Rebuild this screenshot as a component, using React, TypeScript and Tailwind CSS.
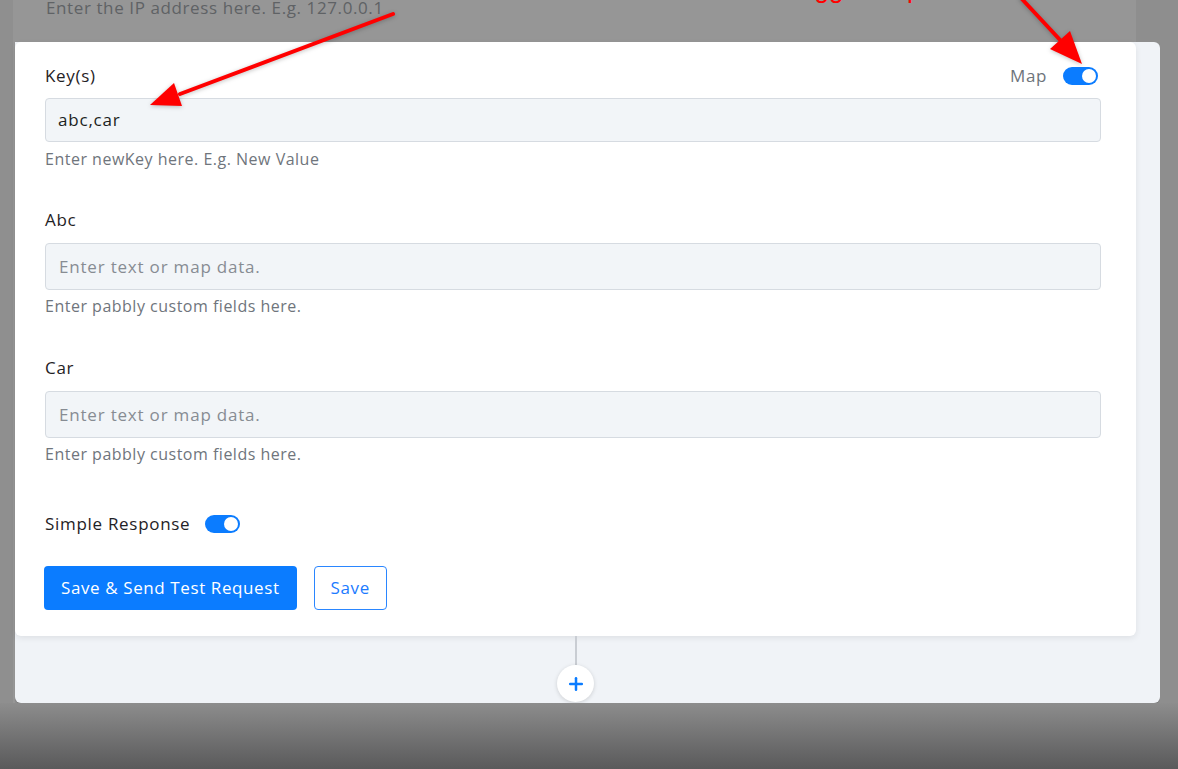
import { Plus } from 'lucide-react'

function Toggle() {
  return (
    <span className="relative inline-flex h-[18px] w-[35px] items-center rounded-full bg-[#0b7cff]">
      <span className="absolute right-[2px] h-[14px] w-[14px] rounded-full bg-white" />
    </span>
  )
}

interface FieldProps {
  label: string
  value?: string
  placeholder?: string
  help: string
  tall?: boolean
}

function Field({ label, value, placeholder, help, tall }: FieldProps) {
  return (
    <div className="flex flex-col">
      <div className="h-[24px] text-[17px] leading-[24px] tracking-[0.7px] text-[#1f2225]">{label}</div>
      <div
        className={`mt-[11px] flex items-center rounded-[4px] border border-[#d6dbe1] bg-[#f2f5f8] px-[13px] text-[17px] tracking-[0.8px] ${
          tall ? 'h-[47px]' : 'h-[44px]'
        }`}
      >
        {value ? (
          <span className="text-[#1c1f22]">{value}</span>
        ) : (
          <span className="text-[#878c93]">{placeholder}</span>
        )}
      </div>
      <div className="mt-[6px] h-[20px] text-[16px] leading-[20px] tracking-[0.5px] text-[#6f757c]">{help}</div>
    </div>
  )
}

export default function App() {
  return (
    <div className="relative flex h-[769px] w-full flex-col overflow-hidden bg-[#8e8e8e] font-['Open_Sans','Liberation_Sans',sans-serif]">
      {/* dimmed strip above the highlighted step */}
      <div className="flex h-[42px] shrink-0">
        <div className="w-[13px] bg-[#8f8f8f]" />
        <div className="w-[1123px] bg-[#969696] pl-[33px]">
          <div className="-mt-[2px] text-[17px] leading-[20px] tracking-[0.6px] text-[#5f6265]">
            Enter the IP address here. E.g. 127.0.0.1
          </div>
        </div>
      </div>

      {/* highlighted step */}
      <div className="flex h-[661px] shrink-0">
        <div className="w-[13px] bg-[#8f8f8f]" />
        <div className="w-[2px] bg-[#969696]" />
        <div className="flex w-[1145px] flex-col rounded-tr-md rounded-b-md bg-[#f0f3f7] shadow-[0_1px_1px_rgba(0,0,0,0.15)]">
          <div className="flex w-[1121px] flex-col rounded-md bg-white pt-[22px] pb-[26px] pl-[30px] pr-[35px] shadow-[0_2px_6px_rgba(0,0,0,0.08)]">
            <div className="flex flex-col">
              <div className="flex h-[24px] items-center justify-between">
                <span className="text-[17px] leading-[24px] tracking-[0.7px] text-[#1f2225]">Key(s)</span>
                <div className="flex items-center gap-[16px] pr-[3px]">
                  <span className="text-[17px] tracking-[0.6px] text-[#6e747b]">Map</span>
                  <Toggle />
                </div>
              </div>
              <div className="mt-[10px] flex h-[44px] items-center rounded-[4px] border border-[#d6dbe1] bg-[#f2f5f8] px-[12px] text-[17px] tracking-[0.8px] text-[#1c1f22]">
                abc,car
              </div>
              <div className="mt-[7px] h-[20px] text-[16px] leading-[20px] tracking-[0.5px] text-[#6f757c]">
                Enter newKey here. E.g. New Value
              </div>
            </div>

            <div className="mt-[39px]">
              <Field label="Abc" placeholder="Enter text or map data." help="Enter pabbly custom fields here." tall />
            </div>
            <div className="mt-[40px]">
              <Field label="Car" placeholder="Enter text or map data." help="Enter pabbly custom fields here." tall />
            </div>

            <div className="mt-[48px] flex h-[24px] items-center gap-[15px]">
              <span className="text-[17px] tracking-[0.7px] text-[#1f2225]">Simple Response</span>
              <Toggle />
            </div>

            <div className="mt-[30px] flex items-center gap-[17px]">
              <button className="-ml-[1px] h-[44px] rounded-[4px] bg-[#0b7cff] px-[17px] text-[17px] tracking-[0.6px] text-white">
                Save &amp; Send Test Request
              </button>
              <button className="h-[44px] rounded-[4px] border border-[#2a86ff] bg-white px-[16px] text-[17px] tracking-[0.6px] text-[#1c7bff]">
                Save
              </button>
            </div>
          </div>

          {/* connector to the add-step button */}
          <div className="flex w-[1121px] flex-col items-center">
            <div className="h-[29px] w-[2px] bg-[#c9cdd3]" />
            <div className="flex h-[37px] w-[37px] items-center justify-center rounded-full bg-white shadow-[0_1px_4px_rgba(0,0,0,0.15)]">
              <Plus className="h-[20px] w-[20px] text-[#0b7cff]" strokeWidth={3} />
            </div>
          </div>
        </div>
        <div className="flex-1 bg-[#8e8e8e]" />
      </div>

      <div className="h-[66px] shrink-0 bg-gradient-to-b from-[#8d8d8d] to-[#5a5a5b]" />

      {/* annotation arrows */}
      <svg className="pointer-events-none absolute inset-0" width="1178" height="769" viewBox="0 0 1178 769">
        <g fill="#ff0000" stroke="#ff0000" strokeLinecap="round" style={{ filter: 'drop-shadow(0 1px 2px rgba(0,0,0,0.25))' }}>
          <line x1="393" y1="14" x2="180" y2="94" strokeWidth="4" />
          <polygon points="150,105 182,106 174,83" stroke="none" />
          <line x1="1021" y1="-2" x2="1062" y2="42" strokeWidth="4" />
          <polygon points="1082,64 1050,49 1070,31" stroke="none" />
        </g>
      </svg>
      <span className="pointer-events-none absolute left-[787px] top-[-24px] font-['Liberation_Sans',sans-serif] text-[26px] leading-[26px] text-[#ff0000]">
        Toggle map button
      </span>
    </div>
  )
}
